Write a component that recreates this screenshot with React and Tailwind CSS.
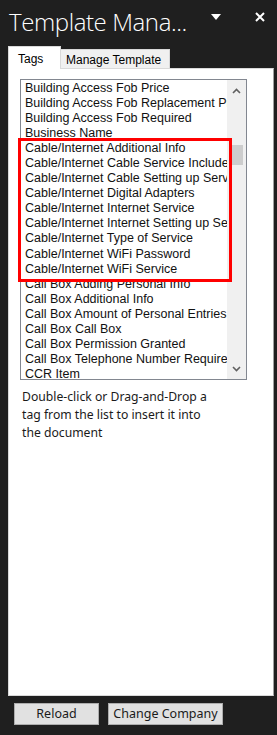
const tags = [
  'Building Access Fob Price',
  'Building Access Fob Replacement Price',
  'Building Access Fob Required',
  'Business Name',
  'Cable/Internet Additional Info',
  'Cable/Internet Cable Service Included',
  'Cable/Internet Cable Setting up Service',
  'Cable/Internet Digital Adapters',
  'Cable/Internet Internet Service',
  'Cable/Internet Internet Setting up Service',
  'Cable/Internet Type of Service',
  'Cable/Internet WiFi Password',
  'Cable/Internet WiFi Service',
  'Call Box Adding Personal Info',
  'Call Box Additional Info',
  'Call Box Amount of Personal Entries',
  'Call Box Call Box',
  'Call Box Permission Granted',
  'Call Box Telephone Number Required',
  'CCR Item',
]

function Chevron({ up }) {
  return (
    <svg width="9" height="6" viewBox="0 0 9 6" className="text-[#606060]">
      <path
        d={up ? 'M1 5 L4.5 1.5 L8 5' : 'M1 1 L4.5 4.5 L8 1'}
        fill="none"
        stroke="currentColor"
        strokeWidth="1.6"
      />
    </svg>
  )
}

export default function App() {
  return (
    <div className="w-[277px] h-[735px] bg-[#1f1f1f] flex flex-col overflow-hidden select-none">
      {/* title bar */}
      <div className="h-[40px] flex items-center pl-[9px] pr-[12px] text-white">
        <span className="flex-1 text-[24px] leading-none font-light tracking-[-0.4px] pt-[3px] font-['Open_Sans',sans-serif]">
          Template Mana...
        </span>
        <svg width="10" height="6" viewBox="0 0 10 6" className="mr-[34px] mt-[-6px]">
          <path d="M0 0 L10 0 L5 6 Z" fill="white" />
        </svg>
        <svg width="10" height="10" viewBox="0 0 10 10" className="mt-[-6px]">
          <path d="M1 1 L9 9 M9 1 L1 9" stroke="white" strokeWidth="2" />
        </svg>
      </div>

      {/* tabs */}
      <div className="h-[28px] pl-[8px] flex items-end font-['Liberation_Sans',sans-serif] text-[12px] text-black">
        <div className="relative z-10 h-[23px] mb-[-1px] w-[53px] bg-white border border-b-0 border-[#d9d9d9] pl-[9px] pt-[3px]">
          Tags
        </div>
        <div className="h-[19px] w-[109px] bg-[#f0f0f0] border border-b-0 border-l-0 border-[#d9d9d9] pl-[5px] pt-[1px]">
          Manage Template
        </div>
      </div>

      {/* tab page */}
      <div className="ml-[8px] w-[266px] h-[628px] bg-white border border-[#d9d9d9] border-r-[#a0a0a0] pt-[10px] pl-[11px]">
        <div className="relative w-[227px] h-[301px] border border-[#828790] flex">
          <div className="flex-1 overflow-hidden pt-[1px] pl-[4px] font-['Liberation_Sans',sans-serif] text-[12.5px] leading-[15.05px] text-[#111]">
            {tags.map((t) => (
              <div key={t} className="whitespace-nowrap">
                {t}
              </div>
            ))}
          </div>
          <div className="w-[19px] bg-[#f0f0f0] flex flex-col items-center">
            <div className="h-[19px] flex items-center justify-center mt-[1px]">
              <Chevron up />
            </div>
            <div className="flex-1 relative w-full">
              <div className="absolute left-[2px] right-[3px] top-[45px] h-[20px] bg-[#cdcdcd]" />
            </div>
            <div className="h-[19px] flex items-center justify-center mb-[1px]">
              <Chevron />
            </div>
          </div>
          {/* highlight box */}
          <div className="absolute left-[-3px] top-[58px] w-[214px] h-[144px] border-[3px] border-[#ff0000] pointer-events-none" />
        </div>
        <p className="mt-[8px] ml-[2px] w-[198px] font-['Noto_Sans',sans-serif] text-[12.2px] leading-[18px] text-[#1a1a1a]">
          Double-click or Drag-and-Drop a tag from the list to insert it into the document
        </p>
      </div>

      {/* buttons */}
      <div className="mt-[7px] pl-[14px] flex gap-[9px] font-['Noto_Sans',sans-serif] text-[12.5px] text-[#1a1a1a]">
        <button className="w-[85px] h-[22px] bg-[#e1e1e1] border border-[#adadad] leading-none">
          Reload
        </button>
        <button className="w-[115px] h-[22px] bg-[#e1e1e1] border border-[#adadad] leading-none">
          Change Company
        </button>
      </div>
    </div>
  )
}
